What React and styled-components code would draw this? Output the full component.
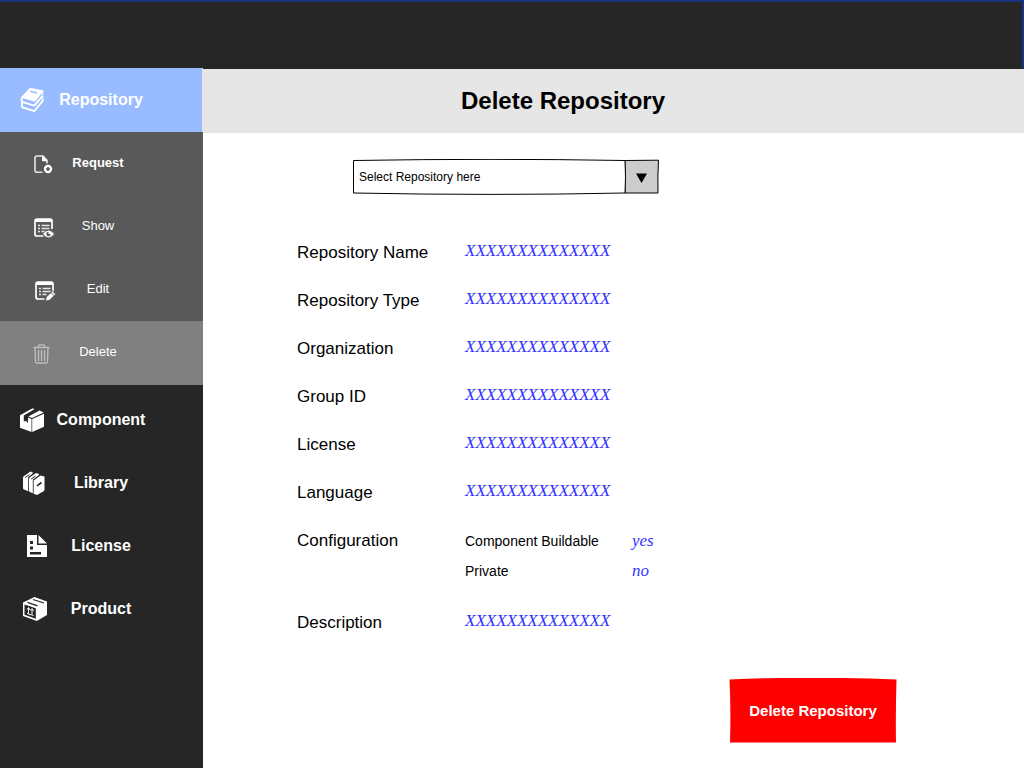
import React from "react";
import styled, { createGlobalStyle } from "styled-components";

const GlobalStyle = createGlobalStyle`
  * { box-sizing: border-box; }
  body {
    margin: 0;
    background: #ffffff;
    color: #000000;
    font-family: "Liberation Sans", Arial, sans-serif;
  }
`;

const Page = styled.div`
  display: flex;
  flex-direction: column;
  min-height: 100vh;
`;

const TopBar = styled.header`
  height: 68px;
  background: #262626;
  border-top: 2px solid #1a3380;
  border-right: 2px solid #1a3380;
`;

const Body = styled.div`
  display: flex;
  flex: 1;
`;

const Sidebar = styled.nav`
  flex: 0 0 203px;
  background: #262626;
`;

const NavList = styled.ul`
  margin: 0;
  padding: 0;
  list-style: none;
`;

const SubList = styled(NavList)`
  background: #595959;
  margin-bottom: 3px;
`;

const NavLink = styled.a`
  display: grid;
  grid-template-columns: 27px 108px;
  align-items: center;
  height: ${(p) => (p.$active ? 64 : 63)}px;
  padding-left: 20px;
  background: ${(p) => (p.$active ? "#99bbff" : "transparent")};
  border-right: ${(p) => (p.$active ? "1px solid #e6e6e6" : "none")};
  color: #ffffff;
  font-size: 16px;
  font-weight: bold;
  line-height: 20px;
  text-decoration: none;
`;

const SubLink = styled.a`
  display: grid;
  grid-template-columns: 22px 86px;
  align-items: center;
  height: ${(p) => (p.$active ? 64 : 63)}px;
  padding: 2px 0 0 33px;
  background: ${(p) => (p.$active ? "#808080" : "transparent")};
  color: #ffffff;
  font-size: 13px;
  font-weight: ${(p) => (p.$strong ? "bold" : "normal")};
  line-height: 16px;
  text-decoration: none;
`;

const NavLabel = styled.span`
  text-align: center;
`;

const SubLabel = styled(NavLabel)`
  padding-bottom: 4px;
`;

const Icon = styled.svg`
  display: block;
  justify-self: ${(p) => p.$align || "center"};
  overflow: visible;
`;

const Main = styled.main`
  flex: 1;
  min-width: 0;
`;

const TitleBar = styled.div`
  display: flex;
  align-items: center;
  justify-content: center;
  height: 65px;
  padding-right: 101px;
  background: #e6e6e6;
  border-top: 1px solid #262626;
`;

const Title = styled.h1`
  margin: 0;
  font-size: 24px;
  line-height: 28px;
`;

const Form = styled.form`
  display: flex;
  flex-direction: column;
  padding: 26px 127px 25px 94px;
`;

const SelectBox = styled.div`
  position: relative;
  width: 306px;
  height: 36px;
  margin-left: 56px;
`;

const Sketch = styled.svg`
  position: absolute;
  inset: 0;
  width: 100%;
  height: 100%;
`;

const Select = styled.select`
  position: relative;
  appearance: none;
  width: 100%;
  height: 100%;
  padding: 0 40px 0 6px;
  border: 0;
  background: transparent;
  color: #000000;
  font-family: inherit;
  font-size: 12px;
`;

const Details = styled.dl`
  margin: 34px 0 0;
`;

const Row = styled.div`
  display: grid;
  grid-template-columns: 168px 1fr;
  min-height: 48px;
`;

const Term = styled.dt`
  font-size: 17px;
  line-height: 48px;
`;

const Value = styled.dd`
  margin: 0;
  color: #3333ff;
  font-family: "Liberation Serif", "Times New Roman", serif;
  font-size: 17px;
  font-style: italic;
  line-height: 44px;
`;

const Settings = styled.dd`
  margin: 0;
  padding: 9px 0 13px;
`;

const Setting = styled.div`
  display: grid;
  grid-template-columns: 167px 1fr;
  font-size: 14px;
  line-height: 30px;
`;

const Answer = styled.span`
  color: #3333ff;
  font-family: "Liberation Serif", "Times New Roman", serif;
  font-size: 17px;
  font-style: italic;
`;

const DeleteButton = styled.button`
  position: relative;
  align-self: flex-end;
  width: 168px;
  height: 65px;
  margin-top: 31px;
  padding: 0;
  border: 0;
  background: transparent;
  color: #ffffff;
  font-family: inherit;
  font-size: 15px;
  font-weight: bold;
  cursor: pointer;
`;

const ButtonText = styled.span`
  position: relative;
`;

const BooksIcon = () => (
  <Icon $align="start" width="24" height="26" viewBox="0 0 24 26" fill="#fff" aria-hidden="true">
    <path d="M9.500 1.300Q10.200.7 11 .9L22.600 3.200Q24 3.600 23.200 4.700L15.500 14Q14.900 14.600 14 14.400L2.200 11Q1 10.500 1.800 9.400Z" />
    <path d="M10.200 4.300L17 6" stroke="#99bbff" strokeWidth="1.500" />
    <g fill="none" stroke="#fff" strokeWidth="1.900" strokeLinejoin="round">
      <path d="M2 10Q1 12.500 2.300 14.800L14.300 18.600L22.600 8.800" />
      <path d="M1.900 14.500V19.300Q2 20.200 3 20.500L14.300 24.200L22.600 14V12" />
    </g>
    <path d="M22.800 4V8.500M22.800 9V13.500" stroke="#fff" strokeWidth="1" />
  </Icon>
);

const RequestIcon = () => (
  <Icon width="20" height="20" viewBox="0 0 20 20" aria-hidden="true">
    <path d="M8.500 17.200H3Q1 17.200 1 15.200V3Q1 1 3 1H9L13 5.200V8.500" fill="none" stroke="#e6e6e6" strokeWidth="1.600" />
    <path d="M8 .5L13.700 6.300H9Q8 6.300 8 5.300Z" fill="#fff" />
    <circle cx="14" cy="14" r="4.200" fill="#fff" />
    <path d="M12 14H16M14 12V16" stroke="#595959" strokeWidth="1.700" />
  </Icon>
);

const FormLines = () => (
  <>
    <path d="M9.500 18H3Q1 18 1 16V3Q1 1 3 1H16Q18 1 18 3V11" fill="none" stroke="#fff" strokeWidth="1.700" />
    <path d="M1 1H18V4H1Z" fill="#fff" />
    <path d="M4 7.500H6M4 10.500H6M4 13.500H6M7.500 7.500H15.500M7.500 10.500H15.500M7.500 13.500H11.500" stroke="#e6e6e6" strokeWidth="1.600" />
  </>
);

const ShowIcon = () => (
  <Icon width="20" height="20" viewBox="0 0 20 20" aria-hidden="true">
    <FormLines />
    <path d="M8.600 16Q14.500 8 20.500 16Q14.500 24 8.600 16Z" fill="#fff" stroke="#595959" />
    <path d="M14.500 13.800A2.200 2.200 0 1 0 16.700 16H14.500Z" fill="#595959" />
  </Icon>
);

const EditIcon = () => (
  <Icon $align="end" width="20" height="20" viewBox="0 0 20 20" aria-hidden="true">
    <FormLines />
    <path d="M10 20.300L11.300 16L17.500 10L20.800 13.200L14.500 19.200Z" fill="#fff" stroke="#595959" />
    <path d="M16 11.500L19.300 14.800" stroke="#595959" />
  </Icon>
);

const TrashIcon = () => (
  <Icon $align="start" width="18" height="20" viewBox="0 0 18 20" fill="none" stroke="#bfbfbf" aria-hidden="true">
    <path d="M.5 3.500H16.500M5.500 3V1.800Q5.500.8 6.500.8H10.500Q11.500.8 11.500 1.800V3M2 4L2.500 17.500Q2.600 19 4 19H13Q14.400 19 14.500 17.500L15 4M5.500 6V17M8.500 6V17M11.500 6V17" strokeWidth="1.300" />
  </Icon>
);

const ComponentIcon = () => (
  <Icon $align="start" width="24" height="24" viewBox="0 0 24 24" fill="#fff" aria-hidden="true">
    <path d="M0 7.300L12.500.2L14.500 1.300L3.800 7.600V13.500L6 12.800L8 15V9.600L11.500 11V24L0 19.800Z" />
    <path d="M8.300 8.400L19.500 2.500L23.800 4.600L12 10Z" />
    <path d="M12.200 11L24 5.700V18.700L12.200 24Z" />
  </Icon>
);

const LibraryIcon = () => (
  <Icon width="22" height="24" viewBox="0 0 22 24" fill="#fff" aria-hidden="true">
    <path d="M0 6.500Q0 5.600 1 5L7.500.5L10 1.400L9 3.200L5.200 6V20.300L1 18.500Q0 18 0 17Z" />
    <path d="M6 8Q6 7 7 6.300L13 2L16.200 3L15.500 4.500L9.800 8.500V22.300L7 21Q6 20.500 6 19.500Z" />
    <path d="M10.600 9.500L17.500 4.500L21.500 5.500V18.500Q21.500 19.500 20.500 20.200L14 24L10.600 22.700Z" />
    <path d="M2.200 6.500L6.500 3.500M8.200 8L12.500 5" stroke="#262626" fill="none" />
    <path d="M14 14.800L18.500 11.500" stroke="#262626" strokeWidth="1.600" />
  </Icon>
);

const LicenseIcon = () => (
  <Icon $align="end" width="20" height="22" viewBox="0 0 20 22" aria-hidden="true">
    <path d="M0 0H10V10H20V22H0Z" fill="#fff" />
    <path d="M11.500 0L20 8.500H11.500Z" fill="#fff" />
    <path d="M3 6H6V9H3ZM3 11.500H6V14.500H3ZM3 17H14V19.500H3Z" fill="#262626" />
  </Icon>
);

const ProductIcon = () => (
  <Icon $align="end" width="24" height="24" viewBox="0 0 24 24" aria-hidden="true">
    <path d="M0 5.500L11.500 0L24 4.500V18L13.800 24L0 19Z" fill="#fff" />
    <path d="M1.500 7.500L12.800 11.200V21.800L1.500 17.800Z" fill="#262626" />
    <path d="M4.500 5.300L14.500 8.800M10 2.500L21 6" stroke="#262626" strokeWidth="1.300" />
    <path d="M5.500 16.500V11M9 17.500V12M4 12.500L5.500 10.500L7 13M7.500 13.500L9 11.500L10.500 14M4 16.500L10.500 18.500" stroke="#fff" fill="none" />
  </Icon>
);

const subItems = [
  { label: "Request", icon: RequestIcon, strong: true },
  { label: "Show", icon: ShowIcon },
  { label: "Edit", icon: EditIcon },
  { label: "Delete", icon: TrashIcon, active: true },
];

const mainItems = [
  { label: "Component", icon: ComponentIcon },
  { label: "Library", icon: LibraryIcon },
  { label: "License", icon: LicenseIcon },
  { label: "Product", icon: ProductIcon },
];

const fields = ["Repository Name", "Repository Type", "Organization", "Group ID", "License", "Language"];
const placeholder = "XXXXXXXXXXXXXX";

export default function App() {
  return (
    <Page>
      <GlobalStyle />
      <TopBar />
      <Body>
        <Sidebar aria-label="Sections">
          <NavList>
            <li>
              <NavLink href="#repository" $active>
                <BooksIcon />
                <NavLabel>Repository</NavLabel>
              </NavLink>
              <SubList>
                {subItems.map(({ label, icon: Glyph, strong, active }) => (
                  <li key={label}>
                    <SubLink href={`#${label.toLowerCase()}`} $strong={strong} $active={active}>
                      <Glyph />
                      <SubLabel>{label}</SubLabel>
                    </SubLink>
                  </li>
                ))}
              </SubList>
            </li>
            {mainItems.map(({ label, icon: Glyph }) => (
              <li key={label}>
                <NavLink href={`#${label.toLowerCase()}`}>
                  <Glyph />
                  <NavLabel>{label}</NavLabel>
                </NavLink>
              </li>
            ))}
          </NavList>
        </Sidebar>
        <Main>
          <TitleBar>
            <Title>Delete Repository</Title>
          </TitleBar>
          <Form onSubmit={(e) => e.preventDefault()}>
            <SelectBox>
              <Sketch viewBox="0 0 306 36" aria-hidden="true">
                <path d="M272 1.500L305.500 1.200Q304.500 18 305 34L272 34Q273 18 272 1.500Z" fill="#cccccc" stroke="#000" />
                <path d="M.5 1.500Q140-.8 272 1.500Q273 18 272 34Q140 36.800 .5 34Z" fill="#fff" stroke="#000" />
                <path d="M283 14.500H294L288.500 24Z" fill="#000" />
              </Sketch>
              <Select aria-label="Repository" defaultValue="">
                <option value="">Select Repository here</option>
              </Select>
            </SelectBox>
            <Details>
              {fields.map((name) => (
                <Row key={name}>
                  <Term>{name}</Term>
                  <Value>{placeholder}</Value>
                </Row>
              ))}
              <Row>
                <Term>Configuration</Term>
                <Settings>
                  <Setting>
                    Component Buildable <Answer>yes</Answer>
                  </Setting>
                  <Setting>
                    Private <Answer>no</Answer>
                  </Setting>
                </Settings>
              </Row>
              <Row>
                <Term>Description</Term>
                <Value>{placeholder}</Value>
              </Row>
            </Details>
            <DeleteButton type="submit">
              <Sketch viewBox="0 0 168 65" aria-hidden="true">
                <path d="M.5 1.500Q80-2 167.500 1.500Q166.500 35 167 64.500H1Q2 32 .5 1.500Z" fill="#ff0000" />
              </Sketch>
              <ButtonText>Delete Repository</ButtonText>
            </DeleteButton>
          </Form>
        </Main>
      </Body>
    </Page>
  );
}
